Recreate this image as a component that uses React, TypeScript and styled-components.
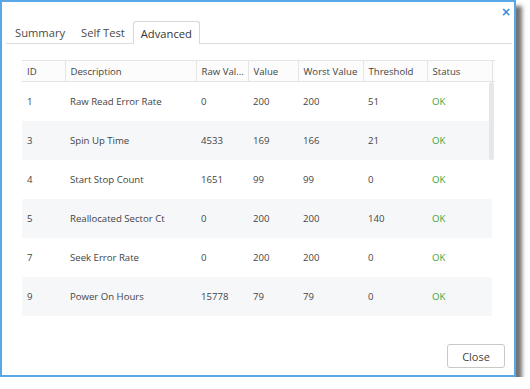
import { FC } from 'react'
import styled, { createGlobalStyle } from 'styled-components'

const GlobalStyle = createGlobalStyle`
  html, body {
    margin: 0;
    padding: 0;
    background: #ffffff;
    font-family: "Open Sans", "Liberation Sans", sans-serif;
  }
`

const Dialog = styled.div`
  position: relative;
  box-sizing: border-box;
  width: 516px;
  height: 377px;
  border: 2px solid #5aa7e8;
  background: #ffffff;
  box-shadow: 6px 6px 4px rgba(40, 40, 40, 0.65);
  display: flex;
  flex-direction: column;
`

const CloseX = styled.span`
  position: absolute;
  top: 4px;
  right: 3px;
  color: #2b8fd9;
  font-size: 12px;
  font-weight: bold;
  line-height: 12px;
  font-family: "DejaVu Sans", sans-serif;
`

const TabBar = styled.div`
  display: flex;
  align-items: flex-end;
  margin: 19px 2px 0 4px;
  padding-left: 1px;
  height: 22px;
  border-bottom: 1px solid #dcdcdc;
`

const Tab = styled.div<{ $active?: boolean }>`
  box-sizing: border-box;
  height: ${(p) => (p.$active ? '23px' : '22px')};
  margin-bottom: ${(p) => (p.$active ? '-1px' : '0')};
  padding: 0 7px;
  display: flex;
  align-items: center;
  font-size: 11.2px;
  color: ${(p) => (p.$active ? '#333' : '#4a4a4a')};
  background: #fff;
  border: 1px solid ${(p) => (p.$active ? '#d8d8d8' : 'transparent')};
  border-bottom: none;
  border-radius: 3px 3px 0 0;
`

const TableArea = styled.div`
  position: relative;
  margin: 16px 0 0 20px;
  width: 473px;
  flex: 1;
`

const Table = styled.table`
  border-collapse: collapse;
  table-layout: fixed;
  width: 473px;
  font-size: 9.6px;
  color: #444;
`

const HeadCell = styled.th`
  box-sizing: border-box;
  height: 21px;
  padding: 0 0 0 5px;
  text-align: left;
  font-weight: normal;
  white-space: nowrap;
  overflow: hidden;
  border-top: 1px solid #e4e4e4;
  border-bottom: 1px solid #e4e4e4;
  border-right: 1px solid #e4e4e4;
  background: #fcfcfc;
  &:last-child {
    border-right: none;
    padding: 0;
  }
`

const Row = styled.tr<{ $striped: boolean }>`
  height: 39px;
  background: ${(p) => (p.$striped ? '#f6f7f9' : 'transparent')};
`

const Cell = styled.td<{ $ok?: boolean }>`
  padding: 0 0 0 5px;
  white-space: nowrap;
  color: ${(p) => (p.$ok ? '#3aa53a' : '#444')};
  &:last-child {
    background: #fff;
    padding: 0;
  }
`

const ScrollThumb = styled.div`
  position: absolute;
  left: 467px;
  top: 22px;
  width: 5px;
  height: 78px;
  border-radius: 3px;
  background: #e6e7ea;
`

const Footer = styled.div`
  display: flex;
  justify-content: flex-end;
  padding: 0 9px 7px 0;
`

const Button = styled.button`
  box-sizing: border-box;
  width: 58px;
  height: 24px;
  border: 1px solid #c9c9c9;
  border-radius: 3px;
  background: #fff;
  color: #444;
  font-family: "Open Sans", "Liberation Sans", sans-serif;
  font-size: 11px;
  padding: 0;
`

const columns = [
  { title: 'ID', width: 43 },
  { title: 'Description', width: 131 },
  { title: 'Raw Val...', width: 52 },
  { title: 'Value', width: 50 },
  { title: 'Worst Value', width: 65 },
  { title: 'Threshold', width: 64 },
  { title: 'Status', width: 65 },
  { title: '', width: 3 },
]

const rows = [
  ['1', 'Raw Read Error Rate', '0', '200', '200', '51'],
  ['3', 'Spin Up Time', '4533', '169', '166', '21'],
  ['4', 'Start Stop Count', '1651', '99', '99', '0'],
  ['5', 'Reallocated Sector Ct', '0', '200', '200', '140'],
  ['7', 'Seek Error Rate', '0', '200', '200', '0'],
  ['9', 'Power On Hours', '15778', '79', '79', '0'],
]

const App: FC = () => {
  return (
    <>
      <GlobalStyle />
      <Dialog>
        <CloseX>×</CloseX>
        <TabBar>
          <Tab>Summary</Tab>
          <Tab>Self Test</Tab>
          <Tab $active>Advanced</Tab>
        </TabBar>
        <TableArea>
          <Table>
            <colgroup>
              {columns.map((c, i) => <col key={i} style={{ width: c.width }} />)}
            </colgroup>
            <thead>
              <tr>
                {columns.map((c, i) => <HeadCell key={i}>{c.title}</HeadCell>)}
              </tr>
            </thead>
            <tbody>
              {rows.map((r, i) =>
                <Row key={r[0]} $striped={i % 2 === 1}>
                  {r.map((v, j) => <Cell key={j}>{v}</Cell>)}
                  <Cell $ok>OK</Cell>
                  <Cell />
                </Row>
              )}
            </tbody>
          </Table>
          <ScrollThumb />
        </TableArea>
        <Footer>
          <Button>Close</Button>
        </Footer>
      </Dialog>
    </>
  )
}

export default App
